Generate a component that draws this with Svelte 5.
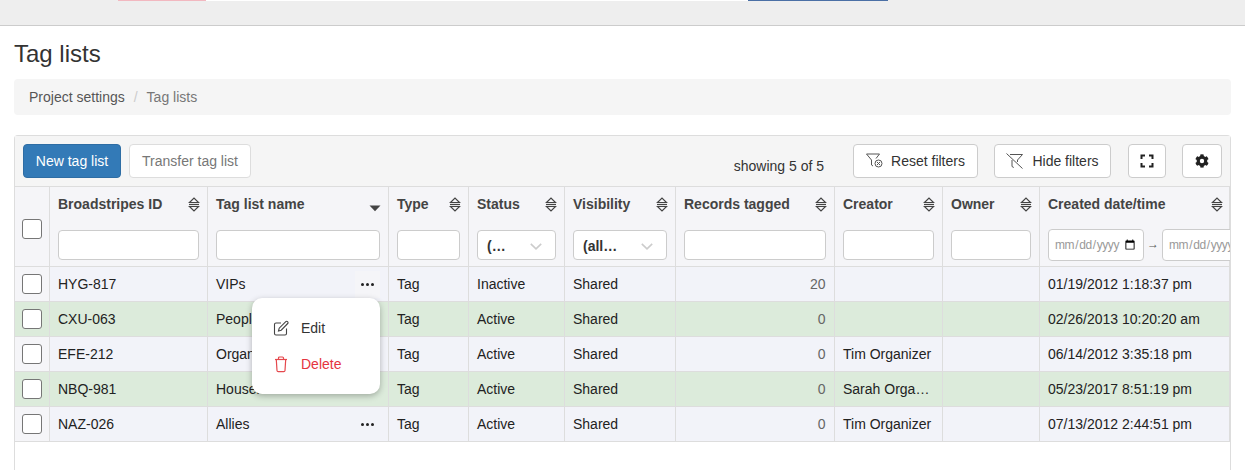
<script>
  const columns = [
    { label: 'Broadstripes ID', filter: 'text' },
    { label: 'Tag list name', filter: 'text', sorted: true },
    { label: 'Type', filter: 'text' },
    { label: 'Status', filter: 'select', value: '(…' },
    { label: 'Visibility', filter: 'select', value: '(all…' },
    { label: 'Records tagged', filter: 'text' },
    { label: 'Creator', filter: 'text' },
    { label: 'Owner', filter: 'text' },
    { label: 'Created date/time', filter: 'date' }
  ]

  const rows = [
    { id: 'HYG-817', name: 'VIPs', status: 'Inactive', records: 20, creator: '', created: '01/19/2012 1:18:37 pm' },
    { id: 'CXU-063', name: 'People', status: 'Active', records: 0, creator: '', created: '02/26/2013 10:20:20 am', green: true },
    { id: 'EFE-212', name: 'Organizers', status: 'Active', records: 0, creator: 'Tim Organizer', created: '06/14/2012 3:35:18 pm' },
    { id: 'NBQ-981', name: 'Households', status: 'Active', records: 0, creator: 'Sarah Organizer', created: '05/23/2017 8:51:19 pm', green: true },
    { id: 'NAZ-026', name: 'Allies', status: 'Active', records: 0, creator: 'Tim Organizer', created: '07/13/2012 2:44:51 pm' }
  ]
</script>

<div class="topbar">
  <div class="sliver">
    <span class="pink"></span><span class="blank"></span><span class="blue"></span>
  </div>
</div>

<main>
  <h1>Tag lists</h1>
  <nav class="crumbs">
    <span>Project settings</span><span class="sep">/</span><span class="current">Tag lists</span>
  </nav>

  <section class="panel">
    <div class="toolbar">
      <button class="btn primary">New tag list</button>
      <button class="btn disabled">Transfer tag list</button>
      <span class="count">showing 5 of 5</span>
      <button class="btn reset">
        <svg width="17" height="15" viewBox="0 0 17 15" fill="none" stroke="#555" stroke-width="1">
          <path d="M.5 1h13L10 5.500"/>
          <path d="M.5 1l5 6v5l1.500 1"/>
          <circle cx="12.500" cy="10.500" r="3.500"/>
          <path d="M11 9l3 3M14 9l-3 3"/>
        </svg>
        Reset filters
      </button>
      <button class="btn hide">
        <svg width="17" height="16" viewBox="0 0 17 16" fill="none" stroke="#555" stroke-width="1">
          <path d="M.5.500l16 15"/>
          <path d="M4 1.500h12.500l-5 5.500v2"/>
          <path d="M6 7v6.500l1.800 1"/>
        </svg>
        Hide filters
      </button>
      <button class="btn icon full" aria-label="Fullscreen">
        <svg width="14" height="14" viewBox="0 0 14 14" fill="none" stroke="#222" stroke-width="2">
          <path d="M1.500 5V1.500H5M9 1.500h3.500V5M12.500 9v3.500H9M5 12.500H1.500V9"/>
        </svg>
      </button>
      <button class="btn icon gear" aria-label="Settings">
        <svg width="14" height="14" viewBox="0 0 512 512" fill="#222">
          <path d="M487 316l-42-25a191 191 0 0 0 0-70l42-25c5-3 7-9 5-14a248 248 0 0 0-55-95c-4-4-10-5-15-2l-42 24a190 190 0 0 0-61-35V26c0-6-4-11-9-12a250 250 0 0 0-110 0c-5 1-9 6-9 12v48a196 196 0 0 0-61 35L88 85c-5-3-11-2-15 2a246 246 0 0 0-55 95c-2 5 0 11 5 14l42 25a191 191 0 0 0 0 70l-42 25c-5 3-7 9-5 14 11 36 30 68 55 95 4 4 10 5 15 2l42-24a190 190 0 0 0 61 35v48c0 6 4 11 9 12 37 8 75 8 110 0 5-1 9-6 9-12v-48a196 196 0 0 0 61-35l42 24c5 3 11 2 15-2a246 246 0 0 0 55-95c2-5 0-11-5-14zM255 336a80 80 0 1 1 0-160 80 80 0 0 1 0 160z"/>
        </svg>
      </button>
    </div>

    <div class="tablewrap">
      <table>
        <colgroup>
          <col style="width:34px" /><col style="width:158px" /><col style="width:181px" /><col style="width:80px" />
          <col style="width:96px" /><col style="width:111px" /><col style="width:159px" /><col style="width:108px" />
          <col style="width:97px" /><col />
        </colgroup>
        <thead>
          <tr>
            <th class="check"><span class="box head"></span></th>
            {#each columns as col}
              <th>
                <div class="label">
                  <span>{col.label}</span>
                  {#if col.sorted}
                    <svg class="sort" width="12" height="15" viewBox="0 0 12 15" fill="#444">
                      <path d="M.5 8.500h11L6 14.200z"/>
                    </svg>
                  {:else}
                    <svg class="sort" width="12" height="15" viewBox="0 0 12 15" fill="none" stroke="#444" stroke-width="1.200">
                      <path d="M1.500 5.500L6 1l4.500 4.500z"/>
                      <path d="M1 7.500h10"/>
                      <path d="M1.500 9.500L6 14l4.500-4.500z"/>
                    </svg>
                  {/if}
                </div>
                {#if col.filter === 'text'}
                  <input class="filter" type="text" />
                {:else if col.filter === 'select'}
                  <div class="select">
                    <span>{col.value}</span>
                    <svg width="12" height="7" viewBox="0 0 12 7" fill="none" stroke="#ccc" stroke-width="1.600"><path d="M.8.800L6 5.800 11.200.800"/></svg>
                  </div>
                {:else}
                  <div class="dates">
                    <input type="date" /><span class="arrow">→</span><input type="date" />
                  </div>
                {/if}
              </th>
            {/each}
          </tr>
        </thead>
        <tbody>
          {#each rows as row, i}
            <tr class:green={row.green}>
              <td class="check"><span class="box"></span></td>
              <td>{row.id}</td>
              <td class="name">
                {row.name}
                <span class="dots" class:hover={i === 0}><i></i><i></i><i></i></span>
              </td>
              <td>Tag</td>
              <td>{row.status}</td>
              <td>Shared</td>
              <td class="num">{row.records}</td>
              <td class="creator">{row.creator}</td>
              <td></td>
              <td class="created">{row.created}</td>
            </tr>
          {/each}
        </tbody>
      </table>

      <div class="menu">
        <div class="item">
          <svg width="16" height="16" viewBox="0 0 16 16" fill="none" stroke="#444" stroke-width="1.100">
            <path d="M8 3H3a1.500 1.500 0 0 0-1.500 1.500v9A1.500 1.500 0 0 0 3 15h9a1.500 1.500 0 0 0 1.500-1.500V8.500"/>
            <path d="M5.500 11l.7-2.800L12.800 1.600a1.200 1.200 0 0 1 1.700 0l.2.200a1.200 1.200 0 0 1 0 1.700L8.200 10.200z"/>
          </svg>
          <span>Edit</span>
        </div>
        <div class="item delete">
          <svg width="16" height="17" viewBox="0 0 16 17" fill="none" stroke="#e5484d" stroke-width="1.200">
            <path d="M2 3.500h12"/>
            <path d="M5.500 3.500V2a1 1 0 0 1 1-1h3a1 1 0 0 1 1 1v1.500"/>
            <path d="M3.300 3.500l.7 11a1.300 1.300 0 0 0 1.300 1.200h5.400a1.300 1.300 0 0 0 1.300-1.200l.7-11"/>
          </svg>
          <span>Delete</span>
        </div>
      </div>
    </div>
  </section>
</main>

<style>
  :global(body) {
    margin: 0;
    background: #fff;
    font-family: "Liberation Sans", Arial, sans-serif;
    font-size: 14px;
    color: #333;
  }

  .topbar {
    height: 25px;
    background: #eee;
    border-bottom: 1px solid #ccc;
  }
  .sliver {
    display: flex;
    height: 1px;
    padding-left: 118px;
  }
  .pink { width: 88px; background: #f2b8c0; }
  .blank { width: 542px; background: #fff; }
  .blue { width: 140px; background: #4a6fa5; }

  main {
    height: 444px;
    overflow: hidden;
    padding: 0 14px;
  }
  h1 {
    margin: 14px 0 12px;
    font-size: 24px;
    font-weight: 400;
    line-height: 27px;
    color: #333;
  }
  .crumbs {
    display: flex;
    align-items: center;
    height: 36px;
    padding: 0 15px;
    background: #f5f5f5;
    border-radius: 4px;
    color: #555;
  }
  .sep { margin: 0 9px; color: #ccc; }
  .current { color: #777; }

  .panel {
    margin-top: 20px;
    height: 340px;
    box-sizing: border-box;
    border: 1px solid #ddd;
    border-bottom: 0;
    border-radius: 4px 4px 0 0;
  }
  .toolbar {
    display: flex;
    align-items: center;
    height: 51px;
    box-sizing: border-box;
    padding: 8px 8px 9px;
    background: #f5f5f5;
    border-bottom: 1px solid #ddd;
  }
  .btn {
    display: inline-flex;
    align-items: center;
    justify-content: center;
    box-sizing: border-box;
    height: 34px;
    padding: 0;
    font: 14px "Liberation Sans", Arial, sans-serif;
    color: #333;
    background: #fff;
    border: 1px solid #ccc;
    border-radius: 4px;
  }
  .primary { width: 98px; color: #fff; background: #337ab7; border-color: #2e6da4; }
  .disabled { width: 122px; margin-left: 8px; color: #777; border-color: #ddd; }
  .count { margin-left: auto; margin-right: 29px; padding-top: 11px; color: #333; }
  .reset { width: 125px; gap: 8px; }
  .hide { width: 117px; gap: 9px; margin-left: 16px; }
  .full { width: 38px; margin-left: 17px; }
  .gear { width: 40px; margin-left: 16px; }

  .tablewrap { position: relative; }
  table {
    width: 1215px;
    table-layout: fixed;
    border-collapse: collapse;
  }
  th, td {
    box-sizing: border-box;
    padding: 0 7.500px 0 8.500px;
    border: 1px solid #ddd;
    text-align: left;
    vertical-align: middle;
    white-space: nowrap;
  }
  th {
    height: 79px;
    padding-bottom: 5px;
    background: #f5f5f8;
    color: #444;
    vertical-align: top;
    font-weight: 700;
  }
  th:first-child, td:first-child { border-left: 0; }
  tr:first-child th { border-top: 0; }
  td {
    height: 35px;
    background: #f2f3f9;
    color: #222;
  }
  .green td { background: #dcebdb; }
  td.check { background: #f5f5f8; }
  .green td.check { background: #dcebdb; }

  .check { padding: 0; text-align: center; }
  th.check { vertical-align: middle; padding: 0; }
  .box {
    display: block;
    width: 20px;
    height: 20px;
    margin: 0 auto 0 7px;
    box-sizing: border-box;
    background: #fff;
    border: 1px solid #767676;
    border-radius: 3px;
  }
  .box.head { margin-top: 5px; }

  .label {
    display: flex;
    align-items: center;
    justify-content: space-between;
    height: 34px;
    margin-bottom: 9px;
  }
  .sort { flex: none; margin-right: -1px; }
  .filter, .select {
    display: flex;
    align-items: center;
    justify-content: space-between;
    box-sizing: border-box;
    width: 100%;
    height: 30px;
    padding: 0 8px;
    background: #fff;
    border: 1px solid #ccc;
    border-radius: 4px;
  }
  .select { padding: 2px 13px 0 9px; color: #333; }
  .dates {
    display: flex;
    align-items: center;
    width: 182px;
    margin-top: -1px;
    overflow: hidden;
  }
  .dates input {
    flex: none;
    width: 96px;
    height: 32px;
    box-sizing: border-box;
    padding: 0 5px;
    font: 12px "Liberation Sans", Arial, sans-serif;
    letter-spacing: -0.4px;
    color: #999;
    background: #fff;
    border: 1px solid #ccc;
    border-radius: 4px;
  }
  .arrow {
    flex: none;
    width: 18px;
    padding-bottom: 3px;
    text-align: center;
    font-size: 12px;
    font-weight: 400;
    color: #555;
  }

  .name { position: relative; }
  .dots {
    position: absolute;
    right: 8px;
    top: 4px;
    display: flex;
    align-items: center;
    justify-content: center;
    gap: 2px;
    width: 25px;
    height: 27px;
  }
  .dots.hover { background: #f5f5f8; }
  .dots i {
    width: 3px;
    height: 3px;
    border-radius: 50%;
    background: #222;
  }
  td.num { padding: 0 8px; text-align: right; color: #666; }
  .creator { overflow: hidden; text-overflow: ellipsis; }
  .created { overflow: hidden; }

  .menu {
    position: absolute;
    left: 237px;
    top: 111px;
    width: 128px;
    height: 96px;
    box-sizing: border-box;
    padding: 12px 0;
    background: #fff;
    border-radius: 10px;
    box-shadow: 0 2px 6px rgba(0, 0, 0, 0.28);
  }
  .item {
    display: flex;
    align-items: center;
    height: 36px;
    padding-left: 21px;
    gap: 12px;
    color: #333;
  }
  .delete { color: #e5343f; }
</style>
